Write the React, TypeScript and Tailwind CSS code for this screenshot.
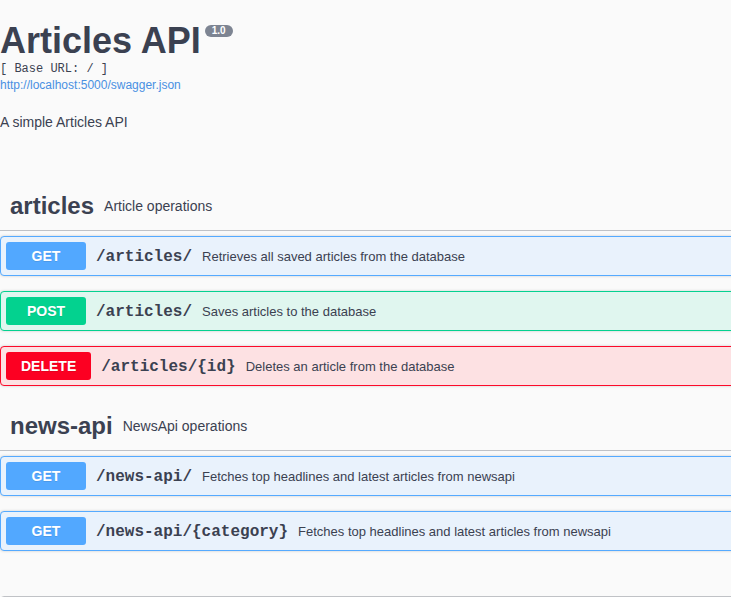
import React from "react";

type Op = { method: "GET" | "POST" | "DELETE"; path: string; desc: string };

const styles: Record<Op["method"], { block: string; badge: string }> = {
  GET: {
    block: "border-[#55aaff] bg-[#e9f2fc]",
    badge: "bg-[#52a8ff]",
  },
  POST: {
    block: "border-[#05d190] bg-[#e0f6ef]",
    badge: "bg-[#03d28f]",
  },
  DELETE: {
    block: "border-[#fc0a2a] bg-[#fde1e3]",
    badge: "bg-[#fc0022]",
  },
};

function OpBlock({ op }: { op: Op }) {
  const s = styles[op.method];
  return (
    <div
      className={`mb-[15px] flex items-center rounded-[4px] border p-[5px] shadow-[0_0_3px_rgba(0,0,0,0.19)] ${s.block}`}
    >
      <span
        className={`min-w-[80px] rounded-[3px] px-[15px] py-[6px] text-center text-[14px] font-bold leading-[16px] text-white [text-shadow:0_1px_0_rgba(0,0,0,0.1)] ${s.badge}`}
      >
        {op.method}
      </span>
      <span className="mt-[2px] px-[10px] font-['Liberation_Mono',monospace] text-[16px] font-bold leading-[20px] text-[#3b4151]">
        {op.path}
      </span>
      <span className="mt-[2px] text-[13px] leading-[16px] text-[#3b4151]">{op.desc}</span>
    </div>
  );
}

function Tag({ name, desc, ops }: { name: string; desc: string; ops: Op[] }) {
  return (
    <div className="flex flex-col">
      <h4 className="mb-[5px] flex items-center border-b border-[rgba(59,65,81,0.3)] py-[10px] pl-[10px] pr-[20px] text-[#3b4151]">
        <span className="text-[24px] font-bold leading-[29px]">{name}</span>
        <small className="px-[10px] text-[14px] leading-[16px]">{desc}</small>
      </h4>
      <div className="flex flex-col">
        {ops.map((op, i) => (
          <OpBlock key={i} op={op} />
        ))}
      </div>
    </div>
  );
}

export default function App() {
  return (
    <div className="min-h-screen w-full overflow-hidden bg-[#fafafa] font-['Liberation_Sans',Arial,sans-serif] text-[#3b4151]">
      <div className="w-[790px]">
        <div className="flex flex-col">
          <div className="mt-[20px] flex items-start">
            <h2 className="text-[36px] font-bold leading-[41px] text-[#3b4151]">Articles API</h2>
            <span className="ml-[4px] mt-[5px] rounded-full bg-[#7d8492] px-[7px] text-[10px] font-bold leading-[12px] text-white">
              1.0
            </span>
          </div>
          <pre className="mt-[1px] font-['Liberation_Mono',monospace] text-[12px] leading-[14px] text-[#3b4151]">
            [ Base URL: / ]
          </pre>
          <a className="mt-[2px] text-[12px] leading-[14px] text-[#4990e2]" href="#">
            http://localhost:5000/swagger.json
          </a>
          <p className="mt-[22px] text-[14px] leading-[16px] text-[#3b4151]">A simple Articles API</p>
        </div>

        <div className="mt-[51px] flex flex-col">
          <Tag
            name="articles"
            desc="Article operations"
            ops={[
              { method: "GET", path: "/articles/", desc: "Retrieves all saved articles from the database" },
              { method: "POST", path: "/articles/", desc: "Saves articles to the database" },
              { method: "DELETE", path: "/articles/{id}", desc: "Deletes an article from the database" },
            ]}
          />
          <Tag
            name="news-api"
            desc="NewsApi operations"
            ops={[
              { method: "GET", path: "/news-api/", desc: "Fetches top headlines and latest articles from newsapi" },
              {
                method: "GET",
                path: "/news-api/{category}",
                desc: "Fetches top headlines and latest articles from newsapi",
              },
            ]}
          />
        </div>

        <div className="mt-[30px] h-[60px] rounded-[4px] border border-[rgba(59,65,81,0.3)]"></div>
      </div>
    </div>
  );
}
